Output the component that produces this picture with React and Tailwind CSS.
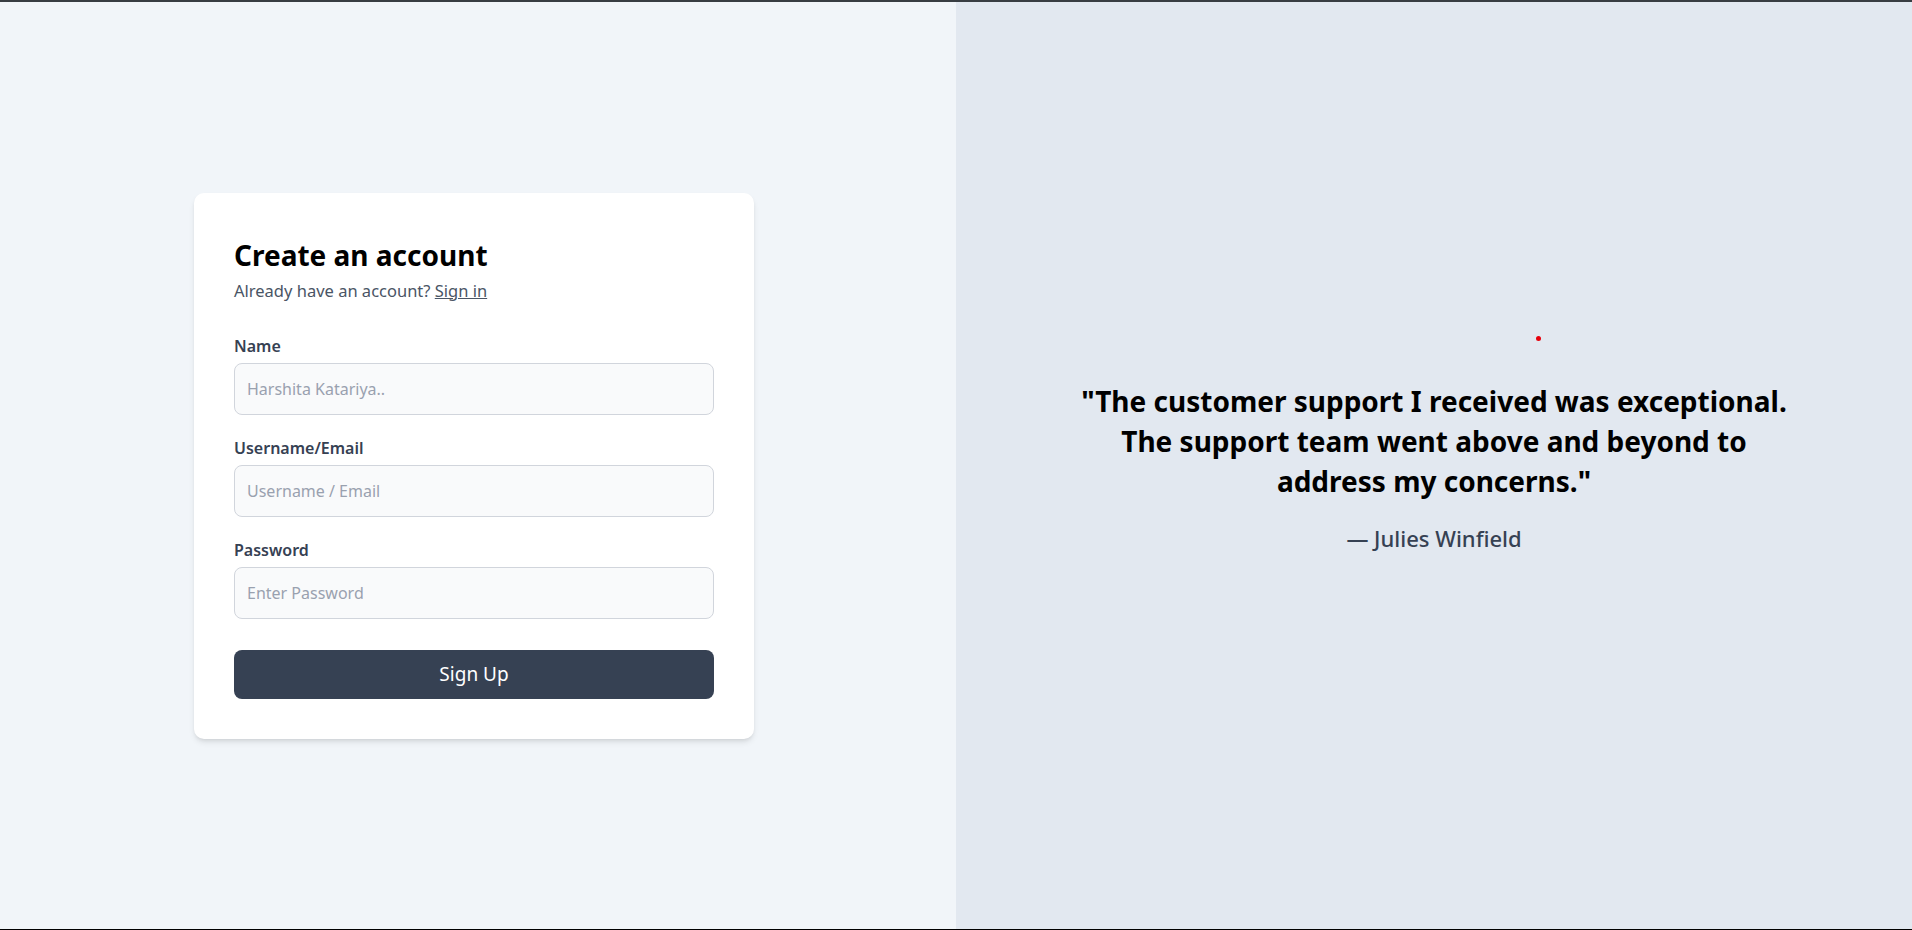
export default function App() {
  return (
    <div
      className="flex h-screen flex-col border-t-2 border-b border-t-[#383d42] border-b-black"
      style={{ fontFamily: '"Noto Sans", "Open Sans", sans-serif' }}
    >
      <div className="grid flex-1 grid-cols-2">
        {/* Left: sign up form */}
        <div className="flex items-center justify-center bg-[#f1f5f9] pr-[8px]">
          <div className="w-[560px] rounded-[10px] bg-white p-10 shadow-md">
            <h1 className="mt-1 text-[28px] font-bold leading-9 text-black">Create an account</h1>
            <p className="mt-[6px] text-[16.5px] leading-6 text-gray-600">
              Already have an account?{' '}
              <a href="#" className="underline">
                Sign in
              </a>
            </p>

            <form className="mt-[31px]" onSubmit={(e) => e.preventDefault()}>
              {[
                { label: 'Name', placeholder: 'Harshita Katariya..', type: 'text' },
                { label: 'Username/Email', placeholder: 'Username / Email', type: 'text' },
                { label: 'Password', placeholder: 'Enter Password', type: 'password' },
              ].map((f) => (
                <div key={f.label} className="mb-[21px]">
                  <label className="mb-[5px] block text-base font-semibold leading-6 text-gray-700">
                    {f.label}
                  </label>
                  <input
                    type={f.type}
                    placeholder={f.placeholder}
                    className="h-[52px] w-full rounded-lg border border-gray-300 bg-gray-50 px-3 text-base text-gray-700 placeholder:text-gray-400 focus:outline-none"
                  />
                </div>
              ))}

              <button
                type="submit"
                className="mt-[10px] h-[49px] w-full rounded-lg bg-gray-700 text-[19px] text-white"
              >
                Sign Up
              </button>
            </form>
          </div>
        </div>

        {/* Right: testimonial */}
        <div className="relative flex items-center justify-center bg-[#e2e8f0]">
          <span className="absolute left-[580px] top-[334px] h-[5px] w-[5px] rounded-full bg-red-600" />
          <div className="mt-[3px] max-w-[740px] text-center">
            <p className="text-[28px] font-bold leading-10 text-black">
              "The customer support I received was exceptional. The support team went above and beyond to address my concerns."
            </p>
            <p className="mt-[22px] text-[22px] font-medium leading-[30px] text-gray-700">— Julies Winfield</p>
          </div>
        </div>
      </div>
    </div>
  );
}
